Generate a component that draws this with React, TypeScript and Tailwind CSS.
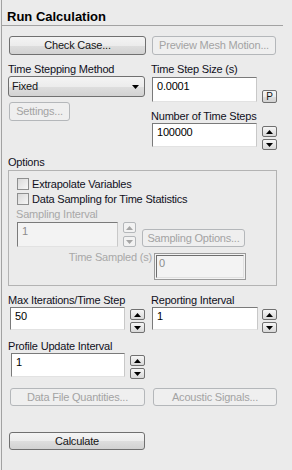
import React from "react";

const btnEnabled =
  "border border-[#707070] rounded-[3px] bg-[linear-gradient(to_bottom,#f4f4f4_0%,#ececec_50%,#dedede_51%,#d2d2d2_100%)] text-[#151515]";
const btnDisabled = "border border-[#b4b7ba] rounded-[3px] bg-[#efefef] text-[#a3a3a3]";

function Btn({
  children,
  disabled,
  className,
}: {
  children: React.ReactNode;
  disabled?: boolean;
  className: string;
}) {
  return (
    <div
      className={`${disabled ? btnDisabled : btnEnabled} ${className} flex items-center justify-center shrink-0 leading-[13px]`}
    >
      {children}
    </div>
  );
}

function Tri({ up, color }: { up: boolean; color: string }) {
  return (
    <svg width="7" height="4" viewBox="0 0 7 4">
      {up ? <polygon points="0,4 7,4 3.5,0" fill={color} /> : <polygon points="0,0 7,0 3.5,4" fill={color} />}
    </svg>
  );
}

function Spinner({ disabled, className }: { disabled?: boolean; className: string }) {
  const cls = disabled
    ? "border border-[#b4b7ba] rounded-[2px] bg-[#f2f2f2]"
    : "border border-[#707070] rounded-[2px] bg-[linear-gradient(to_bottom,#f6f6f6,#d8d8d8)]";
  const col = disabled ? "#a6a6a6" : "#000";
  return (
    <div className={`flex flex-col shrink-0 ${className}`}>
      <div className={`${cls} h-[11px] flex items-center justify-center`}>
        <Tri up color={col} />
      </div>
      <div className={`${cls} h-[11px] flex items-center justify-center`}>
        <Tri up={false} color={col} />
      </div>
    </div>
  );
}

function Input({
  value,
  className,
  disabled,
}: {
  value: string;
  className: string;
  disabled?: boolean;
}) {
  return (
    <div
      className={`${className} shrink-0 border border-t-[#7a7a7a] border-l-[#7a7a7a] border-r-[#c8c8c8] border-b-[#e2e2e2] ${
        disabled ? "bg-[#f3f3f3] text-[#8c8c8c]" : "bg-white text-black"
      } pl-[4px] pt-[2px] leading-[13px]`}
    >
      {value}
    </div>
  );
}

function Label({ children, className, disabled }: { children: React.ReactNode; className?: string; disabled?: boolean }) {
  return (
    <div className={`leading-[13px] h-[13px] whitespace-nowrap ${disabled ? "text-[#a8a8a8]" : "text-[#10101c]"} ${className ?? ""}`}>
      {children}
    </div>
  );
}

function Check({ label }: { label: string }) {
  return (
    <div className="flex items-start h-[13px]">
      <div className="ml-[8px] w-[12px] h-[12px] border border-[#8e8f8f] bg-[linear-gradient(135deg,#d9d9d9,#f7f7f7)] shrink-0" />
      <div className="ml-[3px] leading-[13px] text-[#10101c] whitespace-nowrap">{label}</div>
    </div>
  );
}

export default function App() {
  return (
    <div className="w-[292px] h-[470px] bg-[#ebebeb] overflow-hidden font-['Liberation_Sans',Arial,sans-serif] text-[11px] tracking-[-0.2px]">
      <div className="ml-[1px] h-full border-l border-[#a2a2a2]">
        {/* Title */}
        <div className="w-[281px] h-[26px] border-b border-[#a2a2a2] pl-[5px] pt-[9px] text-[13px] font-bold leading-[16px] tracking-normal text-black">
          Run Calculation
        </div>

        <div className="pl-[6px]">
          {/* Row 1 */}
          <div className="mt-[10px] flex">
            <Btn className="ml-[1px] w-[137px] h-[19px]">Check Case...</Btn>
            <Btn disabled className="ml-[6px] w-[124px] h-[19px]">
              Preview Mesh Motion...
            </Btn>
          </div>

          {/* Row 2 */}
          <div className="flex items-start">
            <div className="w-[137px] shrink-0">
              <Label className="mt-[8px]">Time Stepping Method</Label>
              <div className={`${btnEnabled} h-[21px] w-[137px] flex items-center justify-between pl-[3px] pr-[5px]`}>
                <span className="leading-[13px]">Fixed</span>
                <svg width="7" height="4" viewBox="0 0 7 4">
                  <polygon points="0,0 7,0 3.5,4" fill="#000" />
                </svg>
              </div>
              <Btn disabled className="mt-[5px] ml-[1px] w-[61px] h-[19px]">
                Settings...
              </Btn>
            </div>
            <div className="ml-[6px] w-[126px] shrink-0">
              <Label className="mt-[8px]">Time Step Size (s)</Label>
              <div className="flex items-start">
                <Input value="0.0001" className="ml-[1px] mt-[1px] w-[105px] h-[25px]" />
                <div className={`${btnEnabled} !rounded-[2px] ml-[5px] mt-[14px] w-[15px] h-[13px] flex items-center justify-center text-[10px] leading-[10px]`}>
                  P
                </div>
              </div>
              <Label className="mt-[7px]">Number of Time Steps</Label>
              <div className="flex items-start">
                <Input value="100000" className="ml-[1px] w-[105px] h-[24px]" />
                <Spinner className="ml-[5px] mt-[3px] w-[15px] gap-[2px]" />
              </div>
            </div>
          </div>

          {/* Options */}
          <Label className="mt-[6px]">Options</Label>
          <div className="mt-[1px] w-[269px] h-[116px] border border-[#b3b3b3]">
            <div className="mt-[7px]">
              <Check label="Extrapolate Variables" />
            </div>
            <div className="mt-[2px]">
              <Check label="Data Sampling for Time Statistics" />
            </div>
            <Label disabled className="mt-[2px] ml-[7px]">
              Sampling Interval
            </Label>
            <div className="flex items-start">
              <Input disabled value="1" className="ml-[8px] mt-[1px] w-[101px] h-[25px]" />
              <Spinner disabled className="ml-[5px] mt-[1px] w-[13px] gap-[3px]" />
              <Btn disabled className="ml-[6px] mt-[8px] w-[103px] h-[18px]">
                Sampling Options...
              </Btn>
            </div>
            <div className="mt-[4px] w-[237px] flex justify-end items-start">
              <Label disabled className="mr-[2px]">
                Time Sampled (s)
              </Label>
              <div className="mt-[2px] w-[92px] h-[27px] border border-[#9a9a9a] bg-[#f3f3f3] p-px shrink-0">
                <div className="h-full border border-t-[#6e6e6e] border-l-[#6e6e6e] border-r-[#e0e0e0] border-b-[#e0e0e0] pl-[2px] pt-[1px] leading-[13px] text-[#8c8c8c]">
                  0
                </div>
              </div>
            </div>
          </div>

          {/* Max Iterations / Reporting */}
          <div className="mt-[8px] flex items-start">
            <div className="w-[137px] shrink-0">
              <Label>Max Iterations/Time Step</Label>
              <div className="flex items-start">
                <Input value="50" className="ml-[2px] w-[115px] h-[23px]" />
                <Spinner className="ml-[5px] mt-[2px] w-[15px] gap-[2px]" />
              </div>
            </div>
            <div className="ml-[6px] w-[126px] shrink-0">
              <Label>Reporting Interval</Label>
              <div className="flex items-start">
                <Input value="1" className="ml-[1px] w-[106px] h-[23px]" />
                <Spinner className="ml-[4px] mt-[2px] w-[15px] gap-[2px]" />
              </div>
            </div>
          </div>

          {/* Profile Update */}
          <Label className="mt-[7px]">Profile Update Interval</Label>
          <div className="flex items-start">
            <Input value="1" className="ml-[3px] w-[114px] h-[24px]" />
            <Spinner className="ml-[5px] mt-[2px] w-[15px] gap-[2px]" />
          </div>

          {/* Data buttons */}
          <div className="mt-[9px] flex">
            <Btn disabled className="ml-[2px] w-[135px] h-[18px]">
              Data File Quantities...
            </Btn>
            <Btn disabled className="ml-[8px] w-[124px] h-[18px]">
              Acoustic Signals...
            </Btn>
          </div>

          <Btn className="mt-[26px] ml-[1px] w-[136px] h-[18px]">Calculate</Btn>
        </div>
      </div>
    </div>
  );
}
